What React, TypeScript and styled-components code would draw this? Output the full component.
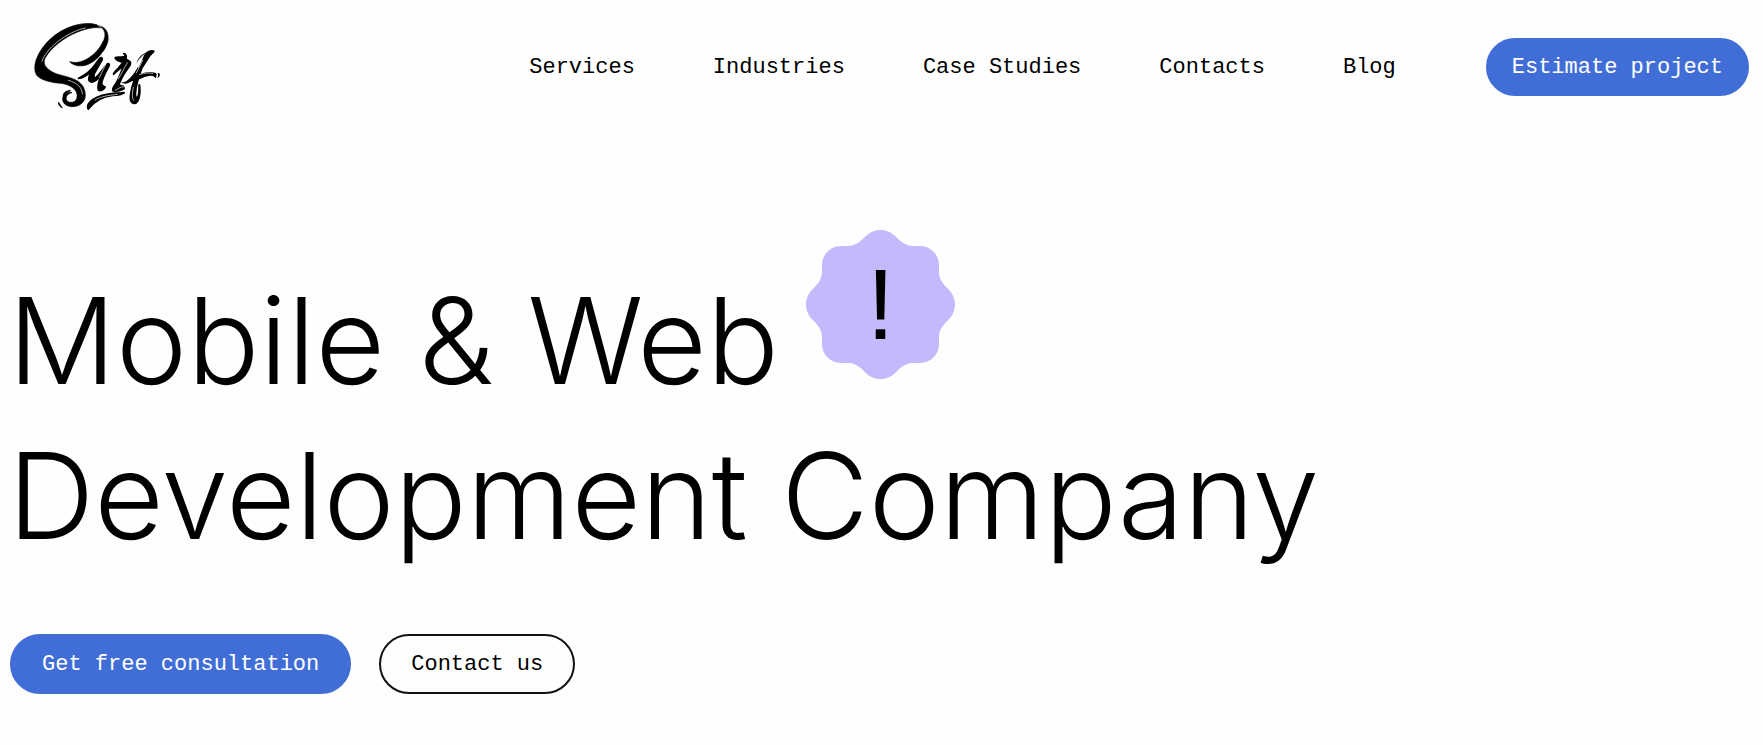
import React from 'react';
import styled, { createGlobalStyle, css } from 'styled-components';

const GlobalStyle = createGlobalStyle`
  *, *::before, *::after { box-sizing: border-box; }
  body {
    margin: 0;
    background: #fefefe;
    color: #000;
    font-family: 'Liberation Mono', monospace;
  }
`;

const Header = styled.header`
  display: flex;
  align-items: center;
  justify-content: space-between;
  min-height: 134px;
  padding: 0 14px 0 20px;
`;

const LogoLink = styled.a`
  display: block;
  flex: none;
  svg { display: block; }
`;

const HeaderRight = styled.div`
  display: flex;
  align-items: center;
  gap: 90px;
`;

const NavList = styled.ul`
  display: flex;
  gap: 78px;
  margin: 0;
  padding: 2px 0 0;
  list-style: none;
`;

const NavLink = styled.a`
  color: #000;
  font-size: 22px;
  line-height: 32px;
  text-decoration: none;
  white-space: nowrap;
`;

const PillButton = styled.button<{ $outline?: boolean; $compact?: boolean }>`
  height: ${(p) => (p.$compact ? 58 : 60)}px;
  padding: 2px ${(p) => (p.$compact ? 24 : 30)}px 0;
  border: 2px solid #416ed6;
  border-radius: 30px;
  background: #416ed6;
  color: #fff;
  font-family: inherit;
  font-size: 22px;
  line-height: 32px;
  white-space: nowrap;
  cursor: pointer;
  ${(p) =>
    p.$outline &&
    css`
      border-color: #111;
      background: transparent;
      color: #000;
    `}
`;

const Hero = styled.main`
  padding: 96px 8px 52px;
`;

const Title = styled.h1`
  margin: 0;
  font-family: Inter, sans-serif;
  font-size: 120px;
  font-weight: 300;
  line-height: 155px;
`;

const TitleRow = styled.span`
  display: flex;
  align-items: flex-end;
  gap: 27px;
`;

const TitleLine = styled.span`
  display: block;
`;

const Badge = styled.span`
  display: grid;
  place-items: center;
  width: 149px;
  height: 149px;
  margin-bottom: 39px;
  font-family: 'Liberation Sans', sans-serif;
  font-size: 100px;
  font-weight: 400;
  line-height: 145px;

  > * { grid-area: 1 / 1; }
`;

const Actions = styled.div`
  display: flex;
  gap: 28px;
  margin-top: 61px;
  padding-left: 2px;
`;

/* One quarter of the scalloped outline, clockwise from the top. */
const quarter: Array<[string, number[]]> = [
  ['C', [80, 0, 85.5, 2.3, 89.5, 6.3]],
  ['L', [92, 8.8]],
  ['C', [96.3, 13.3, 101.5, 16, 107.5, 16]],
  ['L', [114, 16]],
  ['C', [124.5, 16, 133, 24.5, 133, 35]],
  ['L', [133, 41.5]],
  ['C', [133, 47.5, 135.7, 52.7, 140.2, 57]],
  ['L', [142.7, 59.5]],
  ['C', [146.7, 63.5, 149, 69, 149, 74.5]],
];

const turn = (points: number[], times: number) => {
  let out = points;
  for (let t = 0; t < times; t += 1) {
    const prev = out;
    out = prev.map((_, i) => (i % 2 === 0 ? 149 - prev[i + 1] : prev[i - 1]));
  }
  return out;
};

const scallop = `M74.5 0${[0, 1, 2, 3]
  .map((n) => quarter.map(([cmd, pts]) => cmd + turn(pts, n).join(' ')).join(''))
  .join('')}Z`;

const SurfLogo = () => (
  <svg width="160" height="110" viewBox="0 6 480 330" role="img" aria-label="Surf">
    {/* S */}
    <g stroke="#000" strokeWidth="2" strokeLinejoin="round">
      <path d="M247 55C232 37 192 37 158 48C108 64 66 102 49 148C42 168 43 188 52 198C66 211 94 218 122 220C148 223 168 236 171 252C173 268 166 277 153 277C142 277 137 270 139 262C141 254 147 249 156 248C145 244 131 251 128 264C126 279 139 290 157 290C178 290 195 277 196 257C196 230 181 214 158 206C132 196 104 194 88 180C72 168 68 155 78 140C94 114 130 83 173 66C205 53 234 50 247 55Z" />
      <path d="M238 48C254 57 258 74 250 92C241 115 222 134 201 147C183 157 167 160 149 155C159 167 184 172 205 163C233 150 255 123 263 97C269 71 258 51 238 48Z" />
      <path d="M143 246C135 250 132 256 131 262C125 252 137 241 152 241C150 244 148 245 143 246ZM115 276C115 286 120 291 127 294C120 283 119 280 115 276Z" />
    </g>
    {/* gap between the bowl of the S and the u */}
    <path d="M208 168C225 160 241 145 252 126" fill="none" stroke="#fefefe" strokeWidth="6" />
    <g stroke="#000" strokeWidth="6" strokeLinejoin="round">
      {/* u */}
      <path d="M176 205C198 195 214 181 226 164L239 146C244 141 248 143 246 149L229 179C218 196 219 206 229 202C242 191 252 172 261 163C265 159 269 162 267 167C255 189 243 210 245 222C247 230 252 229 255 231C251 239 238 246 235 238C231 225 240 205 247 188C235 206 221 219 211 215C202 210 209 196 215 183C203 194 192 205 176 205Z" />
      {/* r */}
      <path d="M286 143C296 139 310 146 317 138C317 134 314 133 312 131C318 131 320 140 317 147L328 154C334 158 331 165 325 172C312 190 299 209 296 228C308 226 312 231 312 236C304 239 290 247 279 242C276 237 281 231 287 222C297 208 304 182 313 166C296 176 289 185 281 192C282 187 287 183 295 175L311 156C299 156 288 150 286 143Z" />
      {/* f */}
      <path d="M378 131C386 123 396 121 401 124C397 129 393 130 388 138L365 174C354 204 347 231 346 249C345 264 350 268 355 258C359 247 357 232 358 225C360 240 359 262 353 273C346 284 335 281 332 271C329 251 337 228 344 208C350 188 358 172 367 156C372 144 374 136 378 131Z" />
      {/* underline */}
      <path d="M205 297C201 288 207 277 219 269C238 256 264 252 286 250C298 250 306 249 312 248C306 253 296 255 278 256C243 260 221 275 205 297Z" />
    </g>
    <path d="M304 217C319 218 326 207 336 197C345 186 350 177 354 170L356 184L350 198C366 188 387 183 405 188C412 190 411 196 407 205C399 193 384 197 367 204C351 211 344 214 337 213C326 218 316 226 304 217ZM413 189C421 187 423 198 412 205C415 197 415 194 413 189Z" />
    <path d="M376 130C362 134 354 146 349 161C358 145 364 140 376 130Z" />
    {/* dry-brush gaps */}
    <g fill="none" stroke="#fefefe" strokeLinecap="round" strokeWidth="2">
      <path d="M234 46C252 56 257 71 249 91M66 154C75 118 140 65 196 54M145 211C172 218 187 233 187 252M225 270C245 257 272 256 292 253" />
      <path d="M257 163L238 203M322 158L295 207M312 230C302 229 292 238 286 241M340 232C336 252 336 264 341 271M358 194C377 188 389 188 398 190M368 151L349 189" />
    </g>
  </svg>
);

const links = ['Services', 'Industries', 'Case Studies', 'Contacts', 'Blog'];

export default function App() {
  return (
    <>
      <GlobalStyle />
      <Header>
        <LogoLink href="#home">
          <SurfLogo />
        </LogoLink>
        <HeaderRight>
          <nav aria-label="Main">
            <NavList>
              {links.map((label) => (
                <li key={label}>
                  <NavLink href={`#${label.toLowerCase().replace(' ', '-')}`}>{label}</NavLink>
                </li>
              ))}
            </NavList>
          </nav>
          <PillButton type="button" $compact>Estimate project</PillButton>
        </HeaderRight>
      </Header>
      <Hero>
        <Title>
          <TitleRow>
            <span>Mobile &amp; Web</span>
            <Badge>
              <svg width="149" height="149" viewBox="0 0 149 149" aria-hidden="true">
                <path d={scallop} fill="#c3bafc" />
              </svg>
              <span>!</span>
            </Badge>
          </TitleRow>
          <TitleLine>Development Company</TitleLine>
        </Title>
        <Actions>
          <PillButton type="button">Get free consultation</PillButton>
          <PillButton type="button" $outline>Contact us</PillButton>
        </Actions>
      </Hero>
    </>
  );
}
